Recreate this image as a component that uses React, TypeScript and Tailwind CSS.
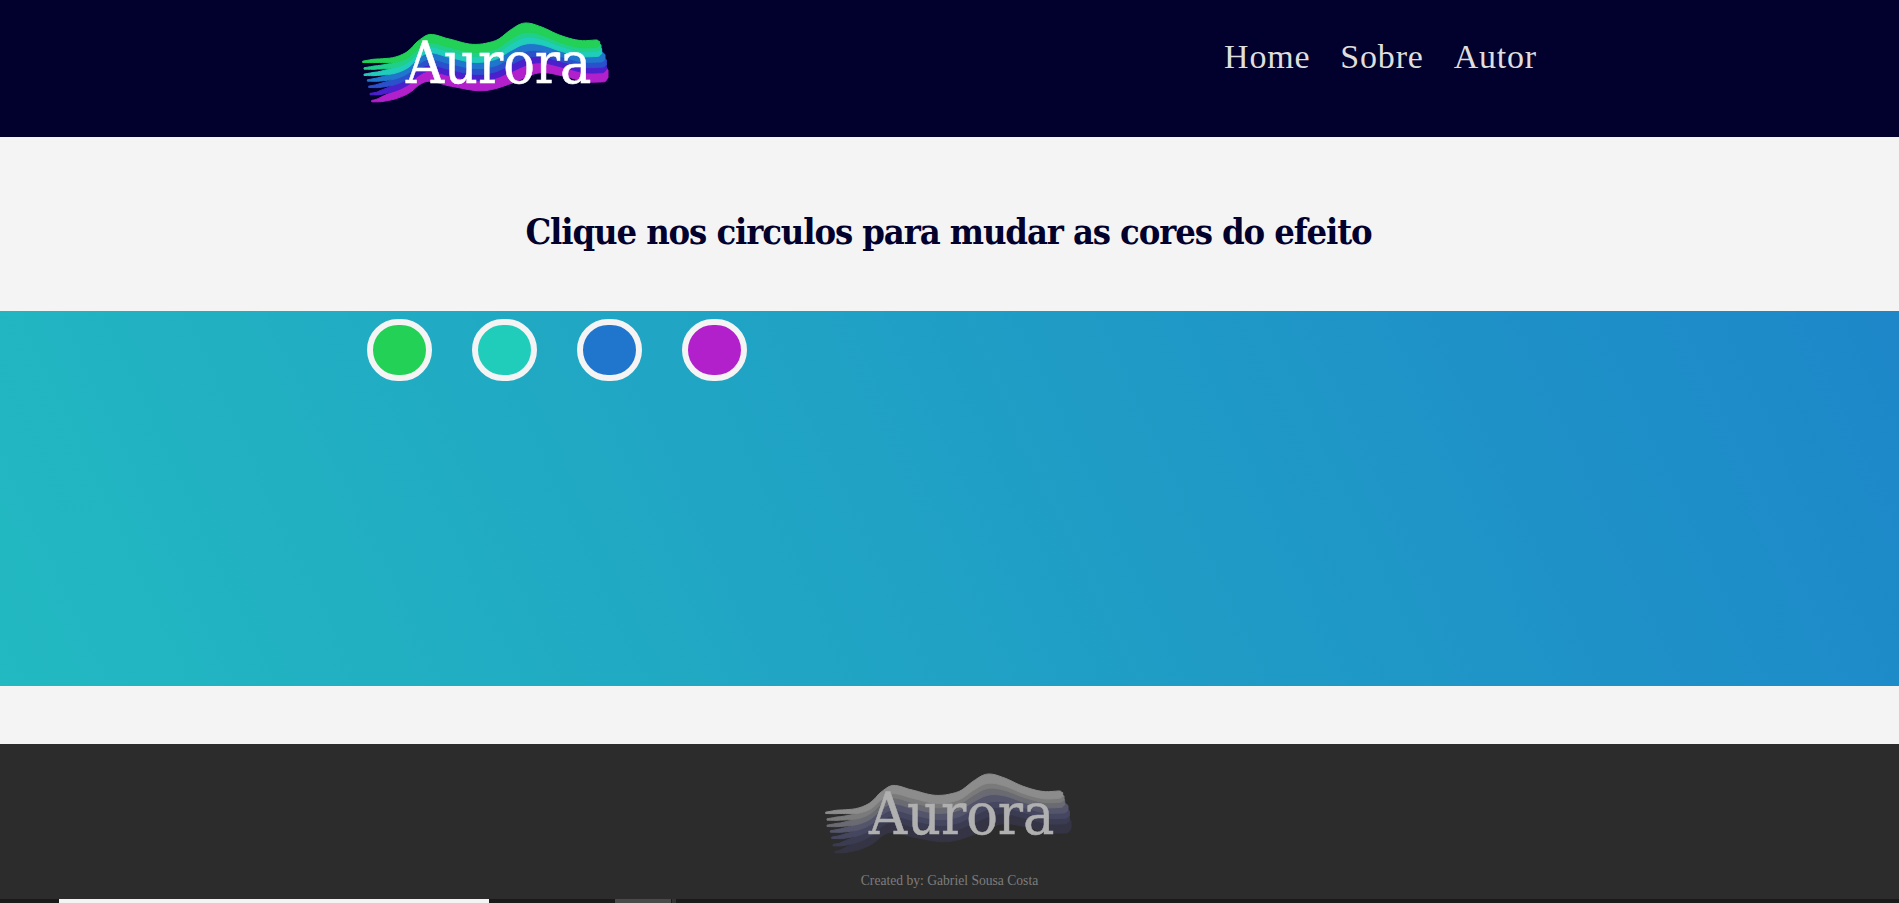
const bands = [
  { fill: "#b220cc", start: 95, left: 303, right: 805, t: 0.76, w: 0.34 },
  { fill: "#4a20cc", start: 90, left: 282, right: 800, t: 0.6, w: 0.24 },
  { fill: "#2a50cc", start: 86, left: 260, right: 800, t: 0.49, w: 0.2 },
  { fill: "#2076cc", start: 82, left: 241, right: 796, t: 0.37, w: 0.2 },
  { fill: "#20cdbb", start: 72, left: 224, right: 786, t: 0.24, w: 0.2 },
  { fill: "#1fcf8a", start: 72, left: 205, right: 784, t: 0.14, w: 0.16 },
  { fill: "#22d156", start: 68, left: 185, right: 780, t: 0.06, w: 0.14 },
];

const greyBands = ["#343444", "#3b3c52", "#45465f", "#54556b", "#6a6a72", "#7a7a7a", "#8c8c8c"];

const topEdge: [number, number][] = [
  [70, 185], [150, 178], [200, 155], [240, 122], [270, 106], [320, 118], [400, 136], [470, 124],
  [520, 88], [555, 72], [600, 82], [660, 108], [720, 124], [780, 122],
];
const bottomEdge: [number, number][] = [
  [70, 308], [150, 300], [210, 280], [260, 252], [330, 266], [430, 280], [520, 258], [600, 226],
  [680, 236], [740, 252], [805, 252],
];

function at(points: [number, number][], x: number) {
  let i = 0;
  while (i < points.length - 2 && x > points[i + 1][0]) i++;
  const [x0, y0] = points[i];
  const [x1, y1] = points[i + 1];
  const p = points[Math.max(i - 1, 0)][1];
  const n = points[Math.min(i + 2, points.length - 1)][1];
  const u = (x - x0) / (x1 - x0);
  return y0 + 0.5 * u * (y1 - p + u * (2 * p - 5 * y0 + 4 * y1 - n + u * (3 * (y0 - y1) + n - p)));
}

// one ribbon of the logo: thin on the left, where the strands fan out, round at the right end
function ribbon(start: number, left: number, right: number, t: number, w: number) {
  const upper: string[] = [];
  const lower: string[] = [];
  const xs: number[] = [];
  for (let x = start; x < right - 12; x += 10) xs.push(x);
  for (let x = right - 12; x <= right; x += 2) xs.push(x);
  for (const x of xs) {
    const top = at(topEdge, x);
    const span = at(bottomEdge, x) - top;
    const blend = Math.min(Math.max((x - 110) / 120, 0), 1);
    const mid = (left - (x - start) * 0.08) * (1 - blend) + (top + span * t) * blend;
    const edge = x > right - 12 ? Math.sqrt(1 - ((x - right + 12) / 12) ** 2) : 1;
    const taper = Math.min((x - start) / 30, 1);
    const half = ((2 + 3 * taper) * (1 - blend) + (span * w * 0.5 + 2) * blend) * Math.max(edge, 0.5);
    upper.push(`${x} ${mid - half}`);
    lower.unshift(`${x} ${mid + half}`);
  }
  return `M${upper.join("L")}L${lower.join("L")}Z`;
}

function Logo({ grey = false }: { grey?: boolean }) {
  return (
    <svg viewBox="60 60 760 260" className="block h-[87px] w-[253px]">
      {bands.map((band, i) => (
        <path
          key={band.fill}
          d={ribbon(band.start, band.left, band.right, band.t, band.w)}
          fill={grey ? greyBands[i] : band.fill}
          stroke={grey ? greyBands[i] : band.fill}
          strokeWidth="3"
          strokeLinejoin="round"
        />
      ))}
      <text
        x="198"
        y="248"
        fontSize="176"
        fill={grey ? "#b0b0b0" : "#ffffff"}
        stroke={grey ? "#b0b0b0" : "#ffffff"}
        strokeWidth="1.5"
        className="font-['DejaVu_Serif_Condensed','DejaVu_Serif',serif]"
      >
        Aurora
      </text>
    </svg>
  );
}

const circles = ["bg-[#22d156]", "bg-[#20cdbb]", "bg-[#2076cc]", "bg-[#b220cc]"];

export default function App() {
  return (
    <div className="flex h-[903px] flex-col overflow-hidden bg-[#f4f4f4]">
      <header className="flex h-[137px] shrink-0 items-start justify-between bg-[#02002c] pl-[360px] pr-[362px] pt-[20px]">
        <Logo />
        <nav className="mt-[12px] flex gap-[30px] font-['Liberation_Serif',serif] text-[34px] leading-[50px] tracking-[0.8px] text-[#dedede]">
          <span>Home</span>
          <span>Sobre</span>
          <span>Autor</span>
        </nav>
      </header>
      <h1 className="flex h-[174px] shrink-0 items-center justify-center pr-[2px] pt-[14px] font-['DejaVu_Serif_Condensed','DejaVu_Serif',serif] text-[36px] font-bold tracking-[-1.1px] text-[#02002c]">
        Clique nos circulos para mudar as cores do efeito
      </h1>
      <section className="flex h-[375px] shrink-0 items-start gap-[40px] bg-[linear-gradient(65deg,#22b9c1,#1d87c9)] pl-[367px] pt-[8px]">
        {circles.map((color) => (
          <div key={color} className={`h-[62px] w-[65px] rounded-full border-[6px] border-[#f4f4f4] ${color}`} />
        ))}
      </section>
      <div className="h-[58px] shrink-0" />
      <footer className="flex h-[155px] shrink-0 flex-col items-center bg-[#2c2c2c] pt-[27px]">
        <Logo grey />
        <p className="mt-[13px] font-['Liberation_Serif',serif] text-[13.6px] leading-[20px] text-[#7d7d7d]">
          Created by: Gabriel Sousa Costa
        </p>
      </footer>
      <div className="flex h-[4px] shrink-0 bg-[#1a1a1a] pl-[59px]">
        <div className="w-[430px] bg-[#f4f4f4]" />
        <div className="ml-[126px] w-[56px] bg-[#4a4a4a]" />
        <div className="ml-[1px] w-[4px] bg-[#333333]" />
      </div>
    </div>
  );
}
